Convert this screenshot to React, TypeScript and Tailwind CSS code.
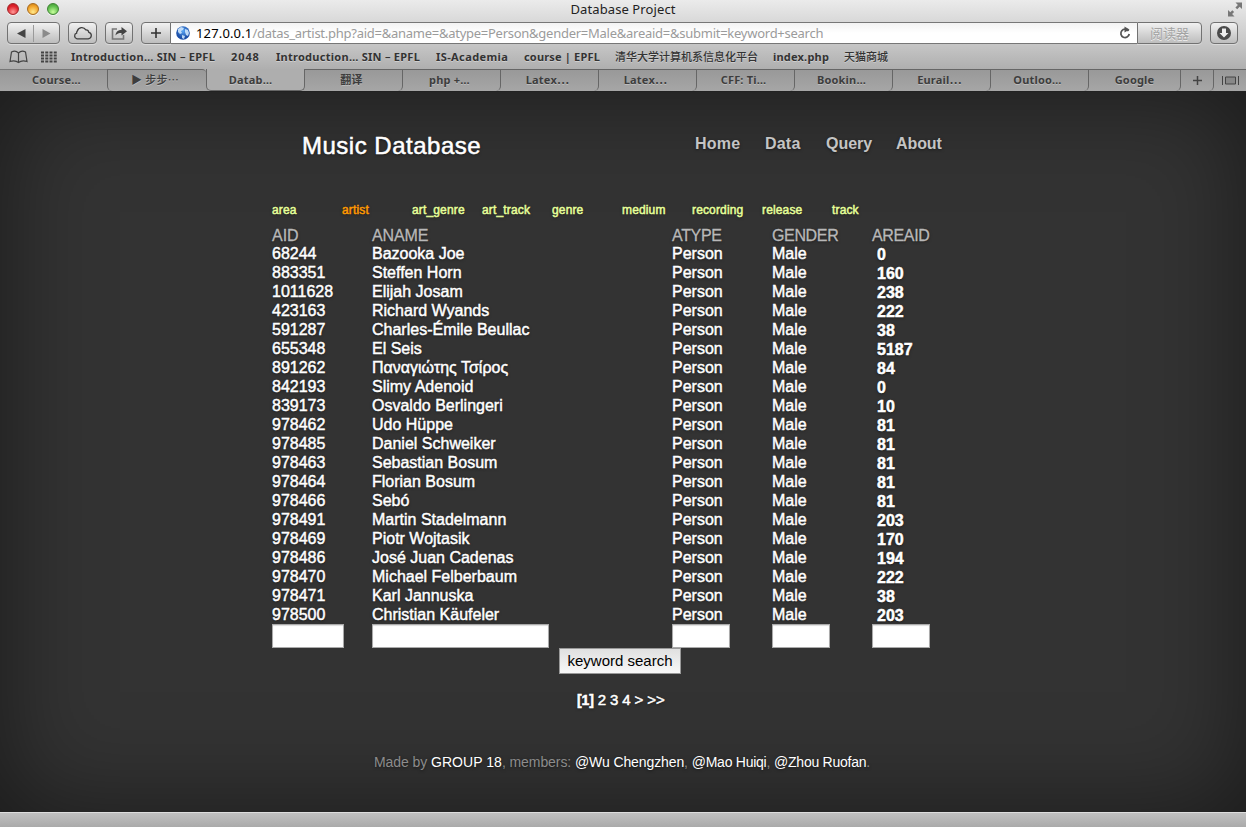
import React from "react";

const rows: [string, string, string][] = [
  ["68244", "Bazooka Joe", "0"],
  ["883351", "Steffen Horn", "160"],
  ["1011628", "Elijah Josam", "238"],
  ["423163", "Richard Wyands", "222"],
  ["591287", "Charles-Émile Beullac", "38"],
  ["655348", "El Seis", "5187"],
  ["891262", "Παναγιώτης Τσίρος", "84"],
  ["842193", "Slimy Adenoid", "0"],
  ["839173", "Osvaldo Berlingeri", "10"],
  ["978462", "Udo Hüppe", "81"],
  ["978485", "Daniel Schweiker", "81"],
  ["978463", "Sebastian Bosum", "81"],
  ["978464", "Florian Bosum", "81"],
  ["978466", "Sebó", "81"],
  ["978491", "Martin Stadelmann", "203"],
  ["978469", "Piotr Wojtasik", "170"],
  ["978486", "José Juan Cadenas", "194"],
  ["978470", "Michael Felberbaum", "222"],
  ["978471", "Karl Jannuska", "38"],
  ["978500", "Christian Käufeler", "203"],
];

const tables = ["area", "artist", "art_genre", "art_track", "genre", "medium", "recording", "release", "track"];

const bookmarks: [string, string][] = [
  ["Introduction… SIN – EPFL", "w-[160px] tracking-[0.27px]"],
  ["2048", "w-[45px] tracking-[0.9px]"],
  ["Introduction… SIN – EPFL", "w-[160px] tracking-[0.27px]"],
  ["IS-Academia", "w-[88px] tracking-[0.4px]"],
  ["course | EPFL", "w-[91px] tracking-[0.18px]"],
  ["清华大学计算机系信息化平台", "w-[158px] font-medium"],
  ["index.php", "w-[71px] tracking-[0.2px]"],
  ["天猫商城", "w-[60px] font-medium"],
];

const rightTabs = ["翻译", "php +…", "Latex⋯", "Latex⋯", "CFF: Ti…", "Bookin…", "Eurail⋯", "Outloo…"];

const button =
  "flex h-[22px] items-center justify-center rounded-[4px] border border-[#727272] bg-gradient-to-b from-[#f1f1f1] to-[#bdbdbd] shadow-[0_1px_0_rgba(255,255,255,0.35)]";
const tabFill = "bg-gradient-to-b from-[#999] to-[#a6a6a6]";

function Light({ tone }: { tone: string }) {
  return (
    <span
      className={`h-[12px] w-[12px] rounded-full border shadow-[0_1px_0_rgba(255,255,255,0.6)] ${tone}`}
    />
  );
}

function Toolbar() {
  return (
    <div className="flex h-[27px] shrink-0 items-start pt-[4px] pl-[7px]">
      <div className={`${button} w-[53px]`}>
        <svg width="51" height="20" viewBox="0 0 51 20">
          <path d="M17.5 6v9L9 10.500z" fill="#444" />
          <path d="M34.500 6v9l8-4.500z" fill="#8b8b8b" />
          <path d="M25.500 2v17" stroke="#9a9a9a" />
        </svg>
      </div>
      <div className={`${button} ml-[8px] w-[29px]`}>
        <svg width="21" height="16" viewBox="0 0 21 16" fill="none" stroke="#3f3f3f" strokeWidth="1.300">
          <path d="M5 13.800h11.200a3.300 3.300 0 0 0 .6-6.500 2.800 2.800 0 0 0-3-2.400A4.700 4.700 0 0 0 5.300 6 3 3 0 0 0 4.600 8.200 2.900 2.900 0 0 0 5 13.800z" />
        </svg>
      </div>
      <div className={`${button} ml-[8px] w-[28px]`}>
        <svg width="18" height="16" viewBox="0 0 18 16" fill="none">
          <path d="M7 4H2.500v10h11v-4" stroke="#777" strokeWidth="1.600" />
          <path d="M5.500 10.500C6 6.500 8 5 11.500 5V2L17 6.300l-5.500 4.200V8C9 8 7 8.500 5.500 10.500z" fill="#444" />
        </svg>
      </div>
      <div className={`${button} ml-[8px] w-[30px] rounded-r-none`}>
        <svg width="12" height="12" viewBox="0 0 12 12">
          <path d="M6 1v10M1 6h10" stroke="#333" strokeWidth="1.600" />
        </svg>
      </div>
      <div className="flex h-[22px] w-[966px] items-center border-y border-[#777] bg-gradient-to-b from-[#f3f3f3] via-white to-white pl-[5px]">
        <svg width="14" height="14" viewBox="0 0 14 14" className="shrink-0">
          <defs>
            <radialGradient id="globe" cx="50%" cy="35%">
              <stop offset="0" stopColor="#5aa6f5" />
              <stop offset="1" stopColor="#1c4fa8" />
            </radialGradient>
          </defs>
          <circle cx="7" cy="7" r="6.800" fill="url(#globe)" />
          <path d="M2 3l3-2 3 1-1 2-2 1 1 2-2 1-2-2zM9 3l3 1 1 3-1 3-2-1-1-3zM6 9l3 1-1 3-2-1z" fill="#d7ecff" opacity=".85" />
        </svg>
        <span className="ml-[6px] pt-px text-[13px] whitespace-nowrap text-[#9b9b9b]">
          <span className="tracking-[0.15px] text-black">127.0.0.1</span>
          <span className="tracking-[-0.26px]">
            /datas_artist.php?aid=&amp;aname=&amp;atype=Person&amp;gender=Male&amp;areaid=&amp;submit=keyword+search
          </span>
        </span>
        <svg width="14" height="14" viewBox="0 0 14 14" className="mr-[5px] ml-auto" fill="none">
          <path d="M10.500 5A4.200 4.200 0 1 0 11.200 8" stroke="#555" strokeWidth="1.800" />
          <path d="M6.500 0.500v6l5-3z" fill="#555" />
        </svg>
      </div>
      <div className={`${button} w-[65px] rounded-l-none`}>
        <span className="font-['Noto_Sans_CJK_SC'] text-[13px] leading-[16px] text-[#a3a3a3] [text-shadow:0_1px_0_#eee]">阅读器</span>
      </div>
      <div className={`${button} ml-[8px] w-[28px]`}>
        <svg width="16" height="16" viewBox="0 0 16 16">
          <circle cx="8" cy="8" r="7" fill="#4b4b4b" />
          <path d="M6 3.500h4V8h2.500L8 12.500 3.500 8H6z" fill="#eee" />
        </svg>
      </div>
    </div>
  );
}

function Browser() {
  return (
    <header className="flex h-[92px] shrink-0 flex-col border-b border-[#222] bg-gradient-to-b from-[#ebebeb] via-[#c5c5c5] via-50% to-[#a3a3a3] to-90% font-['Noto_Sans','Noto_Sans_CJK_SC',sans-serif]">
      <div className="flex h-[18px] shrink-0 items-center pl-[7px]">
        <div className="flex w-[60px] gap-[8px]">
          <Light tone="border-[#a3262a] bg-[radial-gradient(circle_at_50%_80%,#ff9a98,#e0262e_60%,#c01018)]" />
          <Light tone="border-[#a8691c] bg-[radial-gradient(circle_at_50%_80%,#ffe98d,#f2a52c_60%,#c77a10)]" />
          <Light tone="border-[#3f8434] bg-[radial-gradient(circle_at_50%_80%,#c8ff9d,#62bf4f_60%,#3c9430)]" />
        </div>
        <div className="w-[1112px] text-center text-[13px] leading-[18px] tracking-[0.1px] text-[#222]">Database Project</div>
        <svg width="16" height="16" viewBox="0 0 16 16" className="mr-[3px] ml-auto" fill="#777">
          <path d="M8.500 1.500H15V8l-2.300-2.300-2.500 2.500L8.400 6.400l2.500-2.500zM1 9l2.300 2.300 2-2 1.800 1.800-2 2L7.500 15.500H1z" />
        </svg>
      </div>
      <Toolbar />
      <nav className="flex h-[24px] shrink-0 items-center pl-[9px] text-[11px] font-bold whitespace-nowrap text-[#333] [text-shadow:0_1px_0_rgba(255,255,255,0.35)]">
        <svg width="19" height="14" viewBox="0 0 19 14" fill="none" stroke="#444" strokeWidth="1.200">
          <path d="M9.500 3C7.500 1 4.500 1 2.500 2L1 11.500c3-1 6-1 8.500 1 2.500-2 5.500-2 8.500-1L16.500 2c-2-1-5-1-7 1zM9.500 3v9.500" />
        </svg>
        <svg width="16" height="12" viewBox="0 0 16 12" className="mr-[14px] ml-[13px]">
          <path d="M0 1.500h16M0 4.500h16M0 7.500h16M0 10.500h16" stroke="#444" strokeWidth="2" strokeDasharray="3 1.250" />
        </svg>
        {bookmarks.map(([label, cls], i) => (
          <span key={i} className={cls}>{label}</span>
        ))}
      </nav>
      <div className="flex h-[22px] shrink-0 text-[11px] leading-[20px] font-bold tracking-[0.2px] text-[#3d3d3d] [text-shadow:0_1px_0_rgba(255,255,255,0.3)]">
        <div className={`w-[107px] border-t border-[#777] pl-[6px] text-center ${tabFill}`}>Course…</div>
        <div className={`w-[99px] rounded-tr-[4px] rounded-bl-[5px] border-t border-l border-[#666] pr-[4px] text-center font-medium ${tabFill}`}>▶ 步步⋯</div>
        <div className="w-[99px] rounded-b-[5px] border-x border-b border-[#666] bg-[#aeaeae] pt-px pr-[10px] text-center">Datab…</div>
        {rightTabs.map((t, i) => (
          <div key={i} className={`w-[98px] rounded-br-[5px] border-t border-r border-[#666] pr-[4px] text-center ${tabFill}`}>{t}</div>
        ))}
        <div className={`w-[92px] rounded-br-[5px] border-t border-r border-[#666] text-center ${tabFill}`}>Google</div>
        <div className={`flex w-[33px] items-center justify-center rounded-br-[5px] border-t border-r border-[#666] ${tabFill}`}>
          <svg width="9" height="9" viewBox="0 0 9 9"><path d="M4.500 0v9M0 4.500h9" stroke="#444" strokeWidth="1.500" /></svg>
        </div>
        <div className={`flex flex-1 items-center justify-center border-t border-[#666] ${tabFill}`}>
          <svg width="17" height="9" viewBox="0 0 17 9" fill="none" stroke="#444">
            <path d="M.5 0v9M16.500 0v9" />
            <path d="M3.500 1h10v7h-10z" fill="#888" />
          </svg>
        </div>
      </div>
    </header>
  );
}

const grid = "grid grid-cols-[100px_300px_100px_100px_100px]";
const field = "h-[24px] border border-[#aaa] bg-white shadow-[inset_0_1px_1px_#ddd] outline-none";

export default function App() {
  return (
    <div className="flex h-[827px] w-[1246px] flex-col overflow-hidden font-['Liberation_Sans',Arial,sans-serif]">
      <Browser />
      <main className="flex h-[720px] shrink-0 flex-col bg-[#333] pl-[272px] text-white shadow-[inset_0_0_100px_rgba(0,0,0,0.5)] [text-shadow:0_1px_3px_rgba(0,0,0,0.5)]">
        <div className="flex h-[108px] shrink-0 pt-[38px] pl-[30px]">
          <h1 className="w-[393px] text-[24px] leading-[32px] tracking-[0.5px] [-webkit-text-stroke:0.5px]">Music Database</h1>
          <nav className="flex pt-px text-[16px] leading-[26px] font-bold text-[#c4c4c4]">
            <a className="w-[70px] tracking-[0.2px]">Home</a>
            <a className="w-[61px] tracking-[0.2px]">Data</a>
            <a className="w-[70px]">Query</a>
            <a className="tracking-[-0.1px]">About</a>
          </nav>
        </div>
        <nav className="flex h-[26px] shrink-0 text-[12px] leading-[20px] tracking-[0.15px] text-[#e6ff99] [-webkit-text-stroke:0.5px]">
          {tables.map((t) => (
            <a key={t} className={t === "artist" ? "w-[70px] text-[#ff9900]" : "w-[70px]"}>{t}</a>
          ))}
        </nav>
        <div className={`${grid} h-[19px] shrink-0 text-[16px] leading-[19px] tracking-[-0.35px] text-[#b8b8b8] [-webkit-text-stroke:0.3px]`}>
          <span className="tracking-normal">AID</span><span className="tracking-[-0.1px]">ANAME</span><span>ATYPE</span><span>GENDER</span><span>AREAID</span>
        </div>
        {rows.map(([id, name, area]) => (
          <div key={id} className={`${grid} h-[19px] shrink-0 text-[16px] leading-[18px] [-webkit-text-stroke:0.45px]`}>
            <span>{id}</span>
            <span>{name}</span>
            <span>Person</span>
            <span>Male</span>
            <b className="pt-px pl-[5px]">{area}</b>
          </div>
        ))}
        <form className="-mt-px flex shrink-0 flex-col">
          <div className={grid}>
            <input className={`${field} w-[72px]`} />
            <input className={`${field} w-[177px]`} />
            <input className={`${field} w-[58px]`} />
            <input className={`${field} w-[58px]`} />
            <input className={`${field} w-[58px]`} />
          </div>
          <button type="button" className="ml-[287px] h-[26px] w-[122px] border border-[#999] bg-gradient-to-b from-[#e0e0e0] to-[#f8f8f8] text-[15px] whitespace-nowrap text-black [text-shadow:none]">
            keyword search
          </button>
        </form>
        <div className="mt-[16px] ml-[305px] h-[20px] shrink-0 text-[15px] leading-[20px] tracking-[-0.12px] [-webkit-text-stroke:0.5px]">
          <b className="text-[14px]">[1]</b> 2 3 4 &gt; &gt;&gt;
        </div>
        <footer className="mt-[42px] ml-[102px] text-[14px] leading-[20px] tracking-[-0.08px] whitespace-nowrap text-[#8c8c8c]">
          Made by <a className="tracking-[0.05px] text-white">GROUP 18</a>, members: <a className="tracking-[-0.1px] text-white">@Wu Chengzhen</a>, <a className="tracking-[-0.25px] text-white">@Mao Huiqi</a>, <a className="tracking-[-0.25px] text-white">@Zhou Ruofan</a>.
        </footer>
      </main>
      <div className="h-[15px] shrink-0 border-t border-[#ddd] bg-gradient-to-b from-[#c0c0c0] to-[#aaa]" />
    </div>
  );
}
